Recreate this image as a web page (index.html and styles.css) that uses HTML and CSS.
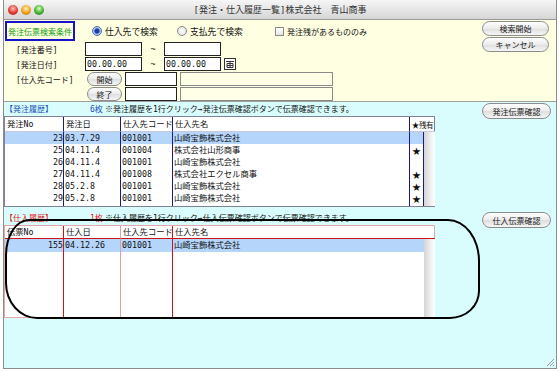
FILE: index.html
```html
<!DOCTYPE html>
<html lang="ja">
<head>
    <meta charset="UTF-8">
    <title>発注・仕入履歴一覧</title>
    <link rel="stylesheet" href="styles.css">
</head>
<body>
    <div class="window">
        <div class="titlebar">
            <div class="lights">
                <span class="light red"></span>
                <span class="light amber"></span>
                <span class="light green"></span>
            </div>
            <div class="title">[発注・仕入履歴一覧]株式会社　青山商事</div>
            <div></div>
        </div>

        <div class="search">
            <div class="form">
                <div class="row row-top">
                    <div class="legend">発注伝票検索条件</div>
                    <div class="opt opt-1"><span class="radio on"></span>仕入先で検索</div>
                    <div class="opt opt-2"><span class="radio"></span>支払先で検索</div>
                    <div class="opt opt-3"><span class="check"></span>発注残があるもののみ</div>
                </div>
                <div class="row">
                    <span class="label">[発注番号]</span>
                    <span class="field"></span>
                    <span class="tilde">~</span>
                    <span class="field"></span>
                </div>
                <div class="row">
                    <span class="label">[発注日付]</span>
                    <span class="field">00.00.00</span>
                    <span class="tilde">~</span>
                    <span class="field">00.00.00</span>
                    <svg class="cal" viewBox="0 0 12 12">
                        <rect x="0.5" y="0.5" width="11" height="11" fill="#fff" stroke="#333"/>
                        <path d="M2 3.5h8M3 5.5h6M3 5.5v4M9 5.5v4M3 9.5h6M6 3.5v6M3 7.5h6" stroke="#333" fill="none"/>
                    </svg>
                </div>
                <div class="row">
                    <span class="label">[仕入先コード]</span>
                    <button class="pill mini">開始</button>
                    <span class="field code"></span>
                    <span class="field name"></span>
                </div>
                <div class="row">
                    <span class="label"></span>
                    <button class="pill mini">終了</button>
                    <span class="field code"></span>
                    <span class="field name"></span>
                </div>
            </div>
            <div class="actions">
                <button class="pill">検索開始</button>
                <button class="pill">キャンセル</button>
            </div>
        </div>

        <div class="history">
            <div class="block block-order">
                <div class="main">
                    <div class="caption">
                        <span class="cap-title blue">【発注履歴】</span>
                        <span class="count blue">6枚</span>
                        <span class="note">※発注履歴を1行クリック→発注伝票確認ボタンで伝票確認できます。</span>
                    </div>
                    <div class="grid order">
                        <div class="c h">発注No</div>
                        <div class="c h">発注日</div>
                        <div class="c h">仕入先コード</div>
                        <div class="c h">仕入先名</div>
                        <div class="c h star-head">★残有</div>

                        <div class="c num sel">23</div><div class="c sel">03.7.29</div><div class="c sel">001001</div><div class="c sel">山崎宝飾株式会社</div><div class="c star sel"></div>
                        <div class="c num">25</div><div class="c">04.11.4</div><div class="c">001004</div><div class="c">株式会社山形商事</div><div class="c star">★</div>
                        <div class="c num">26</div><div class="c">04.11.4</div><div class="c">001001</div><div class="c">山崎宝飾株式会社</div><div class="c star"></div>
                        <div class="c num">27</div><div class="c">04.11.4</div><div class="c">001008</div><div class="c">株式会社エクセル商事</div><div class="c star">★</div>
                        <div class="c num">28</div><div class="c">05.2.8</div><div class="c">001001</div><div class="c">山崎宝飾株式会社</div><div class="c star">★</div>
                        <div class="c num">29</div><div class="c">05.2.8</div><div class="c">001001</div><div class="c">山崎宝飾株式会社</div><div class="c star">★</div>
                        <div class="c"></div><div class="c"></div><div class="c"></div><div class="c"></div><div class="c star"></div>

                        <div class="strip"></div>
                    </div>
                </div>
                <div class="side"><button class="pill">発注伝票確認</button></div>
            </div>

            <div class="block block-receipt">
                <div class="main">
                    <div class="caption">
                        <span class="cap-title red">【仕入履歴】</span>
                        <span class="count red">1枚</span>
                        <span class="note">※仕入履歴を1行クリック→仕入伝票確認ボタンで伝票確認できます。</span>
                    </div>
                    <div class="grid receipt">
                        <div class="c h">伝票No</div>
                        <div class="c h soft">仕入日</div>
                        <div class="c h">仕入先コード</div>
                        <div class="c h name-head">仕入先名</div>

                        <div class="c num sel">155</div><div class="c soft sel">04.12.26</div><div class="c sel">001001</div><div class="c last sel">山崎宝飾株式会社</div>
                        <div class="c"></div><div class="c soft"></div><div class="c"></div><div class="c last"></div>

                        <div class="strip"></div>
                    </div>
                </div>
                <div class="side"><button class="pill">仕入伝票確認</button></div>
            </div>
        </div>

        <div class="annotation"></div>
        <svg class="grip" viewBox="0 0 10 10">
            <path d="M2 9L9 2M5 9L9 5M8 9L9 8" stroke="#9a9a9a" fill="none"/>
        </svg>
    </div>
</body>
</html>
```

FILE: styles.css
```css
* {
    box-sizing: border-box;
    margin: 0;
    padding: 0;
}
body {
    background: #fff;
    font-family: "DejaVu Sans Mono", "Noto Sans CJK JP", monospace;
    font-size: 8.3px;
    color: #111;
}
.window {
    position: relative;
    width: 554px;
    height: 369px;
    margin-left: 3px;
    border: 1px solid #8c8c8c;
    border-top: none;
    display: flex;
    flex-direction: column;
}

/* title bar */
.titlebar {
    height: 20px;
    display: grid;
    grid-template-columns: 1fr auto 1fr;
    align-items: center;
    background: linear-gradient(#f6f6f6, #d6d6d6);
    border-bottom: 1px solid #999;
}
.lights {
    display: flex;
    gap: 3px;
    padding-left: 4px;
}
.light {
    width: 10px;
    height: 10px;
    border-radius: 50%;
}
.light.red {
    background: radial-gradient(circle at 50% 35%, #ffc4bc, #e2392e 55%, #a01810);
}
.light.amber {
    background: radial-gradient(circle at 50% 35%, #fff0b0, #f0a020 55%, #b06800);
}
.light.green {
    background: radial-gradient(circle at 50% 35%, #d8ffc0, #48b030 55%, #1e7010);
}
.title {
    font-size: 9px;
    color: #333;
}

/* search panel */
.search {
    height: 82px;
    display: flex;
    background: #ffffe1;
    border-bottom: 1px solid #a0a0a0;
}
.form {
    flex: 1;
    padding: 1px 0 0 1px;
    display: flex;
    flex-direction: column;
    gap: 1px;
}
.row {
    display: flex;
    align-items: center;
    height: 14px;
    white-space: nowrap;
}
.row-top {
    height: 20px;
}
.legend {
    width: 70px;
    height: 20px;
    border: 2px solid #1414c8;
    color: #10a010;
    font-size: 8px;
    display: flex;
    align-items: center;
    justify-content: center;
}
.opt {
    display: flex;
    align-items: center;
    gap: 3px;
    font-size: 8.8px;
}
.opt-1 {
    margin-left: 17px;
    width: 85px;
}
.opt-2 {
    width: 98px;
}
.opt-3 {
    font-size: 8px;
}
.radio {
    width: 10px;
    height: 10px;
    border-radius: 50%;
    border: 1px solid #8a8a8a;
    background: radial-gradient(#fff, #dcdcdc);
}
.radio.on {
    border-color: #5070a0;
    background: radial-gradient(circle, #1c3ca0 0 2px, #8fb4f0 3px, #eef4ff 5px);
}
.check {
    width: 9px;
    height: 9px;
    border: 1px solid #8a8a8a;
    background: linear-gradient(#fff, #e4e4e4);
}
.label {
    width: 80px;
    padding-left: 11px;
    font-size: 8px;
}
.field {
    width: 57px;
    height: 14px;
    border: 1px solid #222;
    background: #fff;
    line-height: 12px;
    padding-left: 1px;
}
.tilde {
    width: 22px;
    text-align: center;
}
.cal {
    margin-left: 3px;
    width: 12px;
    height: 12px;
}
.field.code {
    margin-left: 3px;
    width: 52px;
}
.field.name {
    margin-left: 3px;
    width: 153px;
    background: #ffffe8;
    border-color: #8a8a8a;
}
.actions {
    display: flex;
    flex-direction: column;
    gap: 1px;
    padding: 1px 7px 0 0;
}
.pill {
    width: 67px;
    height: 15px;
    border: 1px solid #8c8c8c;
    border-radius: 8px;
    background: linear-gradient(#fdfdfd, #ececec 50%, #dedede 51%, #f6f6f6);
    font: inherit;
    font-size: 8px;
    color: #222;
}
.pill.mini {
    margin-left: 2px;
    width: 35px;
    height: 14px;
    border-radius: 7px;
}

/* history lists */
.history {
    flex: 1;
    background: #d9fdfd;
    display: flex;
    flex-direction: column;
}
.block {
    display: flex;
}
.block-order {
    margin-top: 1px;
}
.block-receipt {
    margin-top: 5px;
}
.main {
    width: 431px;
}
.side {
    margin-left: 47px;
}
.side .pill {
    width: 69px;
    height: 16px;
}
.caption {
    height: 13px;
    line-height: 13px;
    font-size: 8px;
    display: flex;
    white-space: nowrap;
}
.cap-title {
    width: 86px;
    padding-left: 1px;
}
.count {
    width: 15px;
}
.blue {
    color: #2050b8;
}
.red {
    color: #e02020;
}
.grid {
    display: grid;
    background: #fff;
}
.order {
    height: 91px;
    border: 1px solid #80809a;
    grid-template-columns: 59px 57px 52px 237px 14px 11px;
    grid-template-rows: 15px repeat(6, 12px) 1fr;
}
.receipt {
    height: 93px;
    border: 1px solid #e4a8a8;
    grid-template-columns: 59px 57px 52px 251px 11px;
    grid-template-rows: 13px 13px 1fr;
}
.c {
    border-right: 1px solid #1a1a80;
    white-space: nowrap;
    overflow: hidden;
    line-height: 12px;
    padding-left: 1px;
}
.receipt .c {
    border-right-color: #cc1414;
    line-height: 13px;
}
.receipt .c.soft {
    border-right-color: #e0a0a0;
}
.receipt .c.last {
    border-right: none;
}
.h {
    line-height: 15px;
    padding-left: 2px;
}
.order .h {
    border-bottom: 1px solid #c8c8d8;
}
.receipt .h {
    border-bottom: 1px solid #cc1414;
    line-height: 12px;
}
.order .star-head {
    grid-column: span 2;
    border-right: none;
    padding: 0;
    text-align: center;
    overflow: visible;
    font-family: "Noto Sans CJK JP", sans-serif;
    font-size: 7.5px;
    letter-spacing: -0.4px;
}
.name-head {
    grid-column: span 2;
    border-right: none !important;
}
.num {
    text-align: right;
    padding: 0;
}
.star {
    text-align: center;
    font-family: "Noto Sans CJK JP", sans-serif;
    font-size: 8.5px;
    padding: 0;
}
.sel {
    background: #b5d5fb;
}
.strip {
    grid-column: -2;
    grid-row: 2 / -1;
    background: linear-gradient(to right, #d4d4d4, #f0f0f0 60%, #fff);
}

/* hand-drawn mark over the list */
.annotation {
    position: absolute;
    left: 1px;
    top: 219px;
    width: 475px;
    height: 100px;
    border: 2px solid #000;
    border-radius: 24px 32px 30px 32px / 36px 42px 28px 36px;
    pointer-events: none;
}
.grip {
    position: absolute;
    right: 1px;
    bottom: 1px;
    width: 10px;
    height: 10px;
}
```
